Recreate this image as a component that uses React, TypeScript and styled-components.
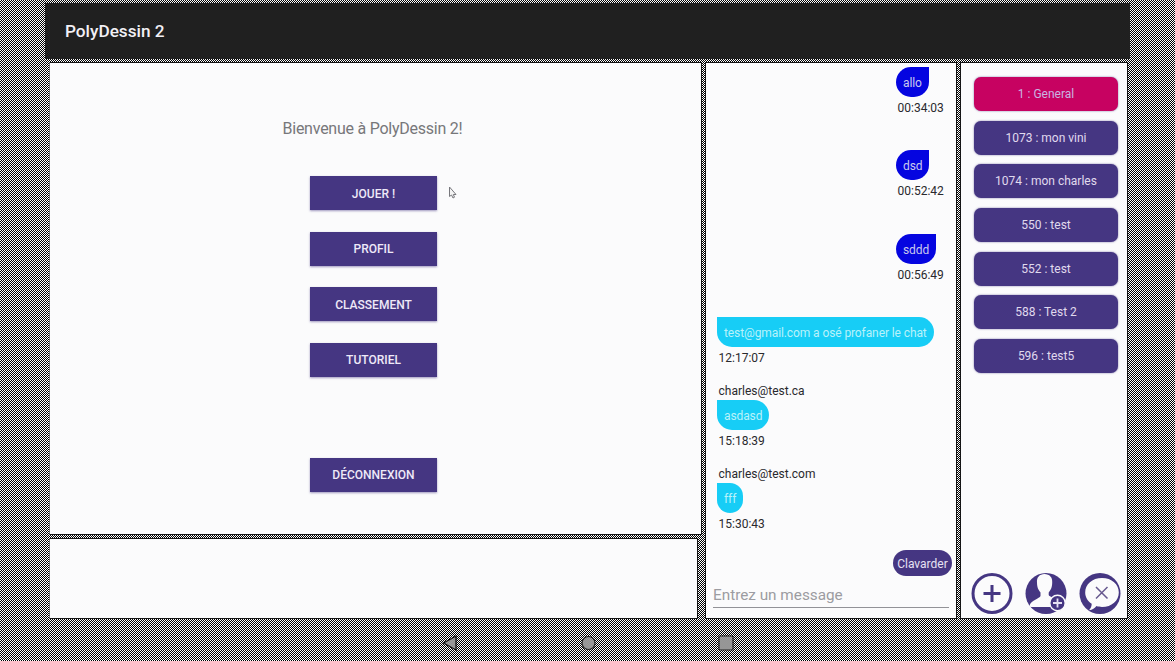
import React from "react";
import styled, { createGlobalStyle } from "styled-components";

const GlobalStyle = createGlobalStyle`
  * { box-sizing: border-box; }
  html, body { margin: 0; overflow: hidden; }
  body { font-family: Roboto, "Liberation Sans", sans-serif; }
`;

const PURPLE = "#453682";

const Screen = styled.div`
  width: 1175px;
  height: 661px;
  padding: 3px 45px 0;
  display: flex;
  flex-direction: column;
  background: repeating-conic-gradient(#000 0 25%, #fff 0 50%) 0 0 / 2px 2px;
`;

const Header = styled.header`
  height: 56px;
  flex: none;
  padding-left: 20px;
  display: flex;
  align-items: center;
  background: #202020;
  color: #f2f0f5;
  font-size: 17.2px;
  line-height: 20px;
  font-weight: 500;
`;

const Panels = styled.main`
  height: 557px;
  flex: none;
  margin-top: 3px;
  padding: 0 2px 0 4px;
  display: flex;
  gap: 3px;
`;

const LeftColumn = styled.div`
  width: 653px;
  display: flex;
  flex-direction: column;
  gap: 3px;
`;

const Panel = styled.section`
  background: #fbfbfc;
  border: 1px solid #151515;
`;

const Menu = styled(Panel)`
  height: 473px;
  padding: 56px 4px 0 0;
  display: flex;
  flex-direction: column;
  align-items: center;
  border-left-color: #777;
`;

const Welcome = styled.h1`
  margin: 0 2px 37px 0;
  font-size: 16px;
  letter-spacing: -0.24px;
  line-height: 20px;
  font-weight: 400;
  color: #77777a;
`;

const MenuButton = styled.button<{ $apart?: boolean }>`
  width: 127px;
  height: 34px;
  flex: none;
  margin: ${(p) => (p.$apart ? "59.5px" : "0")} 0 21.5px;
  padding: 1px 0 0;
  border: 0;
  background: ${PURPLE};
  box-shadow: 0 1px 2px rgba(69, 54, 130, 0.5);
  color: #eee9f8;
  font: 500 12px Roboto, sans-serif;
`;

const Footer = styled(Panel)`
  width: 649px;
  height: 81px;
  border-left-color: #777;
`;

const Chat = styled(Panel)`
  width: 252px;
  display: flex;
  flex-direction: column;
`;

const Messages = styled.div`
  height: 487px;
  flex: none;
  overflow: hidden;
  padding: 4px 12px 0 11px;
`;

const Message = styled.div<{ $own?: boolean }>`
  width: ${(p) => (p.$own ? "48px" : "auto")};
  margin-left: ${(p) => (p.$own ? "auto" : "0")};
  display: flex;
  flex-direction: column;
  align-items: flex-start;
  & + & { margin-top: 11.3px; }
`;

const Sender = styled.div`
  height: 20px;
  padding-left: 1.5px;
  font-size: 12px;
  line-height: 22px;
  color: #29292d;
`;

const Bubble = styled.div<{ $own?: boolean }>`
  height: 30px;
  padding: 0 7px;
  border-radius: ${(p) => (p.$own ? "15px 0 15px 15px" : "0 15px 15px 15px")};
  background: ${(p) => (p.$own ? "#0505e0" : "#17cdf6")};
  color: ${(p) => (p.$own ? "#c9c9ee" : "#b9f2fa")};
  font-size: 12px;
  letter-spacing: -0.1px;
  line-height: 32px;
  white-space: nowrap;
`;

const Time = styled.time`
  height: 22px;
  padding-left: 1.5px;
  font-size: 12px;
  line-height: 22px;
  color: #29292d;
`;

const SendButton = styled.button`
  width: 59px;
  height: 26px;
  margin: 0 4px 0 auto;
  padding: 1px 0 0;
  border: 0;
  border-radius: 13px;
  background: ${PURPLE};
  color: #e6e1f2;
  font: 400 12px Roboto, sans-serif;
`;

const MessageInput = styled.input`
  width: 236px;
  height: 26px;
  margin: 6px 0 0 7px;
  padding: 1px 0 0;
  border: 0;
  border-bottom: 1px solid #929297;
  background: transparent;
  font: 400 15.3px Roboto, sans-serif;
  &::placeholder { color: #9c9ca1; opacity: 1; }
`;

const Rooms = styled(Panel)`
  width: 168px;
  padding: 14px 8px 3px 12px;
  display: flex;
  flex-direction: column;
`;

const RoomList = styled.div`
  display: flex;
  flex-direction: column;
  align-items: center;
  gap: 9.7px;
`;

const Room = styled.button<{ $active?: boolean }>`
  width: 144px;
  height: 34px;
  padding: 0;
  border: 0;
  border-radius: 7px;
  background: ${(p) => (p.$active ? "#c70261" : PURPLE)};
  box-shadow: 0 0 2px rgba(69, 54, 130, 0.7);
  color: ${(p) => (p.$active ? "#c9b4e2" : "#e0daee")};
  font: 400 12px Roboto, sans-serif;
`;

const Actions = styled.div`
  margin-top: auto;
  display: flex;
  gap: 12px;
  margin-left: -2px;
  svg { display: block; flex: none; }
`;

const NavBar = styled.nav`
  height: 42px;
  padding: 6px 0 0 397px;
  display: flex;
  align-items: center;
  gap: 122.5px;
  svg { display: block; }
`;

const Cursor = styled.svg`
  position: absolute;
  left: 448px;
  top: 186px;
`;

type Entry = { text: string; time: string; own?: boolean; sender?: string };

const entries: Entry[] = [
  { text: "allo", time: "00:34:03", own: true },
  { text: "dsd", time: "00:52:42", own: true, sender: "" },
  { text: "sddd", time: "00:56:49", own: true, sender: "" },
  { text: "test@gmail.com a osé profaner le chat", time: "12:17:07", sender: "" },
  { text: "asdasd", time: "15:18:39", sender: "charles@test.ca" },
  { text: "fff", time: "15:30:43", sender: "charles@test.com" },
];

const rooms = [
  "1 : General",
  "1073 : mon vini",
  "1074 : mon charles",
  "550 : test",
  "552 : test",
  "588 : Test 2",
  "596 : test5",
];

const AddIcon = () => (
  <svg width="42" height="42" viewBox="0 0 42 42">
    <circle cx="21" cy="20.5" r="19" fill="#fbfbfc" stroke={PURPLE} strokeWidth="3" />
    <path d="M21 12v17M12.5 20.5h17" stroke={PURPLE} strokeWidth="3" />
  </svg>
);

const AddUserIcon = () => (
  <svg width="42" height="42" viewBox="0 0.5 42 42">
    <circle cx="21" cy="21" r="20.5" fill={PURPLE} />
    <path
      d="M19.5 1.5c-5 0-8 3.5-7.5 8.5 0 5 1.5 7.500 3.500 10v3.500c-1 2.500-9 4-11 9.500L5.500 34.500h23L28 25c-2.500-.8-4-1.500-4.300-2.500V20c2-2.500 3.500-5 3.500-10 .5-5-2.700-8.500-7.700-8.500z"
      fill="#fbfbfc"
    />
    <circle cx="32.5" cy="30.5" r="7.7" fill={PURPLE} stroke="#fbfbfc" strokeWidth="1.4" />
    <path d="M32.5 26v9M28 30.500h9" stroke="#e5e0f2" strokeWidth="1.8" />
  </svg>
);

const CloseChatIcon = () => (
  <svg width="42" height="42" viewBox="0 0.5 42 42">
    <circle cx="21" cy="21" r="20.5" fill={PURPLE} />
    <path
      d="M23 5.500c9.800 0 16.800 6.300 16.800 14.500S32.800 34.500 23 34.500c-2 0-4-.3-5.500-.9-1.800 2.200-3.800 3.700-7.500 4.200 1.800-2 2.700-4 2.700-6.500C8.500 28.500 6.200 24.500 6.200 20 6.200 11.800 13.200 5.500 23 5.500z"
      fill="#fbfbfc"
    />
    <path d="M17 14.500l11.500 11.500M28.500 14.500L17 26" stroke="#67598f" strokeWidth="1.5" />
  </svg>
);

export default function App() {
  return (
    <>
      <GlobalStyle />
      <Screen>
        <Header>PolyDessin 2</Header>
        <Panels>
          <LeftColumn>
            <Menu>
              <Welcome>Bienvenue à PolyDessin 2!</Welcome>
              <MenuButton>JOUER !</MenuButton>
              <MenuButton>PROFIL</MenuButton>
              <MenuButton>CLASSEMENT</MenuButton>
              <MenuButton>TUTORIEL</MenuButton>
              <MenuButton $apart>DÉCONNEXION</MenuButton>
            </Menu>
            <Footer />
          </LeftColumn>
          <Chat>
            <Messages>
              {entries.map((m) => (
                <Message key={m.time} $own={m.own}>
                  {m.sender !== undefined && <Sender>{m.sender}</Sender>}
                  <Bubble $own={m.own}>{m.text}</Bubble>
                  <Time>{m.time}</Time>
                </Message>
              ))}
            </Messages>
            <SendButton>Clavarder</SendButton>
            <MessageInput placeholder="Entrez un message" />
          </Chat>
          <Rooms>
            <RoomList>
              {rooms.map((name, i) => (
                <Room key={name} $active={i === 0}>
                  {name}
                </Room>
              ))}
            </RoomList>
            <Actions>
              <AddIcon />
              <AddUserIcon />
              <CloseChatIcon />
            </Actions>
          </Rooms>
        </Panels>
        <NavBar>
          <svg width="16" height="18" viewBox="0 0 16 18">
            <path d="M1.5 9L14 2v14z" fill="#969696" stroke="#111" strokeWidth="1.3" />
          </svg>
          <svg width="15" height="16" viewBox="0 0 15 16">
            <circle cx="7.5" cy="8" r="6.5" fill="#969696" stroke="#222" strokeWidth="1.2" />
          </svg>
          <svg width="16" height="16" viewBox="0 0 16 16">
            <rect x="1" y="1" width="14" height="14" rx="1" fill="#969696" stroke="#222" strokeWidth="1.2" />
          </svg>
        </NavBar>
      </Screen>
      <Cursor width="10" height="13" viewBox="0 0 10 13">
        <path d="M1.5 1v9.500l2-1.500 1.500 3 1.500-.8L5.300 8.500H8z" fill="#f4f4f4" stroke="#77777c" />
      </Cursor>
    </>
  );
}
